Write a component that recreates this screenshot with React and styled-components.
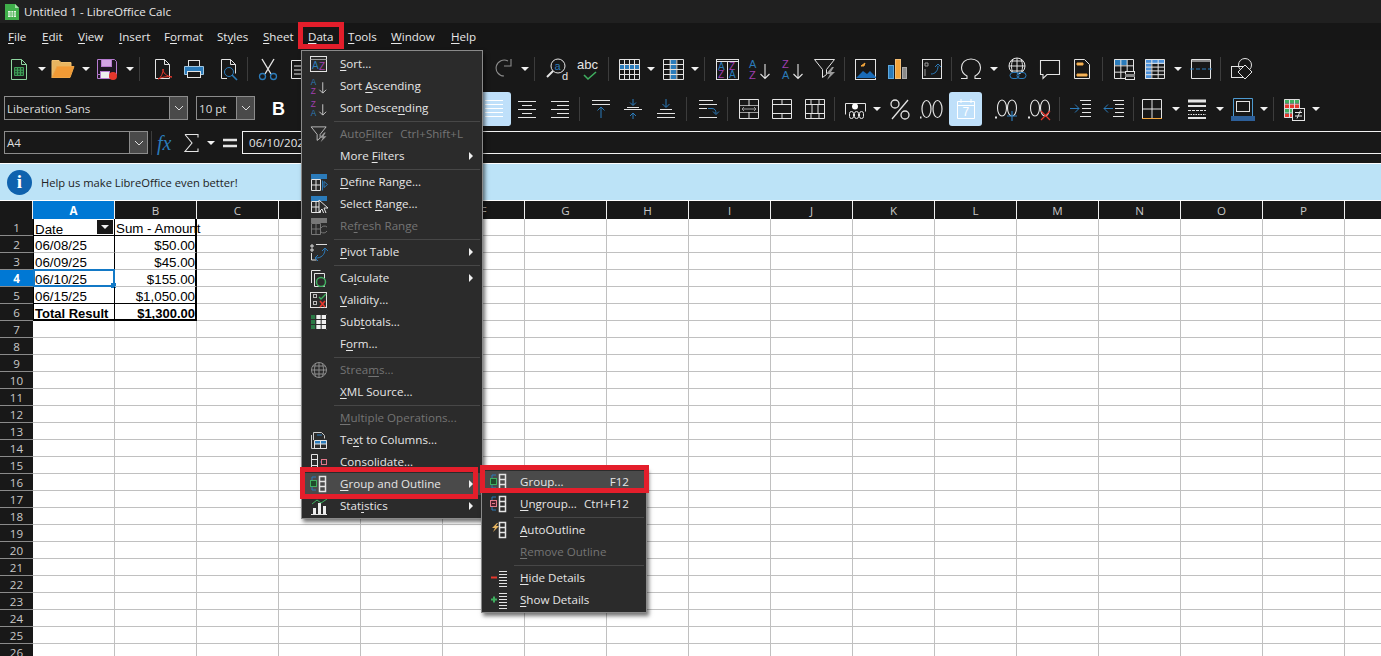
import React from "react";
import styled, { createGlobalStyle } from "styled-components";

const UI_FONT = `"Open Sans", "Noto Sans", sans-serif`;
const W = "#e4e4e4";
const B = "#2b7bba";
const P = "#a03fb0";
const G = "#3fae5f";
const O = "#f2a53c";
const R = "#e5382d";
const D = "#9a9a9a";

const GlobalStyle = createGlobalStyle`
  html, body {
    margin: 0;
    background: #fff;
    overflow: hidden;
  }
  * {
    box-sizing: border-box;
  }
`;

const Window = styled.div`
  position: relative;
  width: 1381px;
  height: 656px;
  overflow: hidden;
  background: #181818;
  font-family: ${UI_FONT};
  font-size: 11.6px;
  color: #e4e4e4;
`;

const TitleBar = styled.div`
  height: 23px;
  background: #202020;
  display: flex;
  align-items: center;
  padding-left: 3px;
  gap: 3px;
  color: #e6e6e6;
`;

const MenuBar = styled.div`
  height: 27px;
  display: flex;
  align-items: center;
  padding-left: 8px;
  gap: 16px;
  background: #161616;
  color: #e8e8e8;
`;

const MenuName = styled.span`
  width: ${(p) => p.$w}px;
  white-space: nowrap;
`;

const Under = styled.span`
  text-decoration: underline;
  text-underline-offset: 2px;
`;

const Toolbar = styled.div`
  display: flex;
  align-items: center;
  height: ${(p) => p.$h}px;
  padding-left: ${(p) => p.$pad || 0}px;
  background: #181818;
`;

const Slot = styled.div`
  flex: none;
  width: ${(p) => p.$w}px;
  margin-left: ${(p) => p.$ml}px;
  height: 34px;
  display: flex;
  align-items: center;
  justify-content: center;
`;

const Caret = styled.i`
  width: 0;
  height: 0;
  border-left: 4px solid transparent;
  border-right: 4px solid transparent;
  border-top: 4px solid #f0f0f0;
`;

const Divider = styled.i`
  flex: none;
  width: 1px;
  height: 24px;
  background: #3c3c3c;
`;

const Toggled = styled.div`
  flex: none;
  width: 33px;
  height: 34px;
  border-radius: 3px;
  background: #bfe0fa;
  display: flex;
  align-items: center;
  justify-content: center;
`;

const Combo = styled.div`
  flex: none;
  width: ${(p) => p.$w}px;
  height: ${(p) => p.$h}px;
  margin-right: ${(p) => p.$mr || 0}px;
  margin-bottom: ${(p) => p.$mb || 0}px;
  border: 1px solid #8c8c8c;
  display: flex;
  align-items: center;
  background: #181818;
  color: #dcdcdc;
  padding-left: 2px;
`;

const ComboText = styled.span`
  flex: 1;
  white-space: nowrap;
`;

const ComboButton = styled.div`
  width: 18px;
  align-self: stretch;
  background: #4a4a4a;
  border-left: 1px solid #8c8c8c;
  display: flex;
  align-items: center;
  justify-content: center;
`;

const FormulaBar = styled.div`
  height: 33px;
  padding: 1px 0 9px 4px;
  display: flex;
  align-items: stretch;
  background: #181818;
`;

const FormulaTools = styled.div`
  display: flex;
  align-items: center;
`;

const FormulaInput = styled.div`
  flex: 1;
  border: 1px solid #f2f2f2;
  border-right: 0;
  display: flex;
  align-items: center;
  padding-left: 6px;
  color: #e6e6e6;
`;

const InfoBar = styled.div`
  height: 38px;
  border-top: 1px solid #fff;
  border-bottom: 1px solid #fff;
  background: #bce3f7;
  display: flex;
  align-items: center;
  gap: 9px;
  padding-left: 7px;
  color: #222;
  font-size: 11.2px;
`;

const InfoBadge = styled.div`
  width: 25px;
  height: 25px;
  border-radius: 50%;
  background: #0f62ae;
  color: #fff;
  font: bold 19px "Liberation Serif", serif;
  display: flex;
  align-items: center;
  justify-content: center;
`;

const Sheet = styled.div`
  display: grid;
  grid-template-columns: 33px repeat(17, 82px);
  grid-template-rows: 18px;
  grid-auto-rows: 17px;
  background: #fff;
`;

const ColHead = styled.div`
  background: ${(p) => (p.$on ? "#0078d4" : "#181818")};
  color: ${(p) => (p.$on ? "#fff" : "#c8c8c8")};
  font-weight: ${(p) => (p.$on ? 700 : 400)};
  border-right: 1px solid #f0f0f0;
  display: flex;
  align-items: center;
  justify-content: center;
`;

const RowHead = styled.div`
  background: ${(p) => (p.$on ? "#0078d4" : "#181818")};
  color: ${(p) => (p.$on ? "#fff" : "#c8c8c8")};
  font-weight: ${(p) => (p.$on ? 700 : 400)};
  border-bottom: 1px solid #8a8a8a;
  display: flex;
  align-items: center;
  justify-content: center;
`;

const Cell = styled.div`
  position: relative;
  border-right: ${(p) => p.$rw || 1}px solid ${(p) => p.$rc || "#c0c0c0"};
  border-bottom: ${(p) => p.$bw || 1}px solid ${(p) => p.$bc || "#c0c0c0"};
  border-left: ${(p) => (p.$frame ? "1px solid #000" : "0")};
  font-family: "Liberation Sans", Arial, sans-serif;
  font-size: ${(p) => (p.$bold ? 13 : 13.33)}px;
  font-weight: ${(p) => (p.$bold ? 700 : 400)};
  color: #000;
  line-height: ${(p) => p.$lh || 19}px;
  white-space: nowrap;
  padding: 0 ${(p) => (p.$right ? 0 : 1)}px 0 1px;
  text-align: ${(p) => (p.$right ? "right" : "left")};
`;

const FilterButton = styled.div`
  position: absolute;
  right: 1px;
  top: 1px;
  width: 16px;
  height: 14px;
  background: #181818;
  display: flex;
  align-items: center;
  justify-content: center;
`;

const CellCursor = styled.div`
  position: absolute;
  left: -1px;
  top: -1px;
  right: -1px;
  bottom: -1px;
  border: 2px solid #1379c6;
`;

const CursorHandle = styled.i`
  position: absolute;
  right: -3px;
  bottom: -3px;
  width: 5px;
  height: 5px;
  background: #1379c6;
`;

const Menu = styled.div`
  position: absolute;
  left: ${(p) => p.$x}px;
  top: ${(p) => p.$y}px;
  width: ${(p) => p.$w}px;
  padding: 2px 0 1px 1px;
  background: #2b2b2b;
  border: 1px solid #8a8a8a;
  box-shadow: 2px 3px 4px rgba(0, 0, 0, 0.55);
  color: #e6e6e6;
`;

const MenuRow = styled.div`
  height: 22px;
  display: flex;
  align-items: center;
  background: ${(p) => (p.$active ? "#4a4a4a" : "transparent")};
  color: ${(p) => (p.$off ? "#747474" : "inherit")};
`;

const RowIcon = styled.div`
  flex: none;
  width: ${(p) => p.$w}px;
  display: flex;
  justify-content: center;
  padding-right: 5px;
`;

const RowLabel = styled.span`
  flex: 1;
  margin-top: -2px;
  white-space: nowrap;
`;

const Shortcut = styled.span`
  margin-top: -2px;
  padding-right: ${(p) => p.$pad}px;
  white-space: nowrap;
`;

const SubArrow = styled.i`
  margin-right: 9px;
  width: 0;
  height: 0;
  border-top: 4px solid transparent;
  border-bottom: 4px solid transparent;
  border-left: 4px solid #f0f0f0;
`;

const MenuLine = styled.div`
  height: 4px;
  margin-left: ${(p) => p.$in}px;
  margin-right: 2px;
  display: flex;
  align-items: center;
  &::after {
    content: "";
    flex: 1;
    height: 1px;
    background: #474747;
  }
`;

const Callout = styled.div`
  position: absolute;
  left: ${(p) => p.$x}px;
  top: ${(p) => p.$y}px;
  width: ${(p) => p.$w}px;
  height: ${(p) => p.$h}px;
  border: 5px solid #e41e2b;
`;

const Ltr = ({ x, y, c, s = 9, children, w = 400 }) => (
  <text x={x} y={y} fill={c} stroke="none" fontSize={s} fontWeight={w} fontFamily="Liberation Sans, sans-serif">
    {children}
  </text>
);

const grid = (x, y, w, h, cols, rows) => {
  let d = `M${x} ${y}h${w}v${h}h${-w}z`;
  for (let i = 1; i < cols; i++) d += `M${x + (i * w) / cols} ${y}v${h}`;
  for (let i = 1; i < rows; i++) d += `M${x} ${y + (i * h) / rows}h${w}`;
  return d;
};

const bars = (x, y, w, ys) => ys.map((v) => `M${x} ${y + v}h${w}`).join("");

const icons = {
  newSheet: (
    <g stroke="#8fd6a0">
      <path d="M4.5 2.5h10l5 5v15h-15z" />
      <path d="M14.500 2.500v5h5" />
      <path d={grid(7.5, 10.5, 9, 8, 3, 3)} stroke="#3f9e58" fill="#1f4a2b" />
    </g>
  ),
  folder: (
    <g>
      <path d="M1 3.5h7l2 2h10v4H6l-5 11z" fill="#e8b560" stroke="#f0c070" />
      <path d="M6 9.5h17l-4 11H1z" fill="#f19a35" stroke="#f0a545" />
    </g>
  ),
  save: (
    <g stroke="#b67bd0">
      <path d="M2.5 2.5h17l2 2v13h-19z M2.5 17.5v4h11" fill="#1d1622" />
      <rect x="6.5" y="2.5" width="10" height="7" fill="#d2a4e4" stroke="#b67bd0" />
      <rect x="5.5" y="14.5" width="9" height="7" fill="#eee" stroke="#b67bd0" />
      <circle cx="18" cy="19" r="4" fill={R} stroke="none" />
    </g>
  ),
  pdf: (
    <g>
      <path d="M5.5 2.5h9l5 5v14h-14z" />
      <path d="M14.5 2.5v5h5" />
      <path d="M8 22c4-2 5-7 5-10 0 4 3 7 9 8-5-1-10 0-14 2z" stroke={R} />
    </g>
  ),
  print: (
    <g>
      <rect x="6.5" y="3.5" width="11" height="6" />
      <path d="M2.5 9.5h19v8h-19z" fill={B} stroke="#9fc5e0" />
      <rect x="5.5" y="14.5" width="13" height="6" fill="#181818" />
    </g>
  ),
  preview: (
    <g>
      <path d="M5.5 2.5h9l5 5v9M11 21.5H5.5v-19M14.5 2.5v5h5" />
      <circle cx="13" cy="15" r="4.5" stroke={B} />
      <path d="M16 18l5 5" stroke={B} strokeWidth="1.6" />
    </g>
  ),
  cut: (
    <g>
      <path d="M6 2l9 15M18 2L9 17" strokeWidth="1.4" />
      <circle cx="6.5" cy="19.5" r="3" stroke={B} strokeWidth="1.3" />
      <circle cx="17.5" cy="19.5" r="3" stroke={B} strokeWidth="1.3" />
    </g>
  ),
  copy: <path d="M6.5 3.5h12v18h-12zM9 9h7M9 13h7M9 17h7" />,
  redo: <path d="M17 4A8 8 0 1 0 13 19M20 2v7h-7" stroke="#8c8c8c" strokeWidth="1.1" />,
  find: (
    <g>
      <circle cx="12" cy="9" r="7" />
      <path d="M7 14l-6 6" strokeWidth="2" />
      <Ltr x="8.500" y="13" c={B} s="11">a</Ltr>
      <Ltr x="16" y="23" c={W} s="11">d</Ltr>
    </g>
  ),
  spell: (
    <g>
      <Ltr x="1" y="12" c={W} s="13">abc</Ltr>
      <path d="M8 18l4 4 8-7" stroke={G} strokeWidth="1.6" />
    </g>
  ),
  rowGrid: (
    <g>
      <path d="M2 7h20v6H2z" fill={B} stroke="none" />
      <path d={grid(2.5, 2.5, 20, 20, 4, 4)} />
    </g>
  ),
  colGrid: (
    <g>
      <path d="M9 2h6v20H9z" fill={B} stroke="none" />
      <path d={grid(2.5, 2.5, 20, 20, 3, 4)} />
    </g>
  ),
  sort: (
    <g>
      <rect x="1.5" y="2.5" width="22" height="20" />
      <path d="M1 4.5h23" />
      <path d="M12.5 5v17" />
      <Ltr x="3" y="13" c={B} s="10">A</Ltr>
      <Ltr x="3" y="21" c={P} s="10">Z</Ltr>
      <Ltr x="14" y="13" c={P} s="10">Z</Ltr>
      <Ltr x="14" y="21" c={B} s="10">A</Ltr>
    </g>
  ),
  menuSort: (
    <g>
      <rect x="0.500" y="1.500" width="16" height="15" />
      <path d="M0.500 4.500h16" stroke={D} />
      <Ltr x="2" y="14" c={B} s="10">A</Ltr>
      <Ltr x="9" y="15" c={P} s="10">Z</Ltr>
    </g>
  ),
  asc: (
    <g>
      <Ltr x="1" y="11" c={B} s="11">A</Ltr>
      <Ltr x="1" y="22" c={P} s="11">Z</Ltr>
      <path d="M17 7v14M12.5 17l4.5 4.5 4.5-4.500" strokeWidth="1.1" />
    </g>
  ),
  desc: (
    <g>
      <Ltr x="1" y="11" c={P} s="11">Z</Ltr>
      <Ltr x="1" y="22" c={B} s="11">A</Ltr>
      <path d="M17 7v14M12.5 17l4.5 4.5 4.5-4.500" strokeWidth="1.1" />
    </g>
  ),
  filter: (
    <g>
      <path d="M1.5 2.5h20l-8 10v5l-4 3v-8z" />
      <path d="M19 10l-6 7h4l-3 6 8-8h-4l3-5z" fill="#9a9a9a" stroke="none" />
    </g>
  ),
  image: (
    <g>
      <rect x="1.5" y="2.5" width="20" height="20" />
      <path d="M2 21l7-7 4 3 3-3 6 6v1z" fill="#1a6cb8" stroke="none" />
      <path d="M7 9l4-3-1 3z" fill={O} stroke={O} />
    </g>
  ),
  chart: (
    <g>
      <rect x="2.5" y="8.5" width="5" height="13" fill={B} stroke="#5da9df" />
      <rect x="9.5" y="2.5" width="5" height="19" fill={O} stroke="#f5bf75" />
      <rect x="16.5" y="10.5" width="4" height="11" fill="#8a8a8a" stroke="#aaa" />
    </g>
  ),
  pivot: (
    <g>
      <rect x="2.5" y="2.5" width="19" height="19" />
      <path d="M5 6h3v3H5zM5 12v7" stroke={D} />
      <path d="M11 17c4 0 7-3 7-8M15 10l3-3 3 3" stroke={B} />
    </g>
  ),
  omega: (
    <path d="M2 21.500h6v-2.500C4 17 2.500 13.500 2.500 10.500 2.500 5.500 6.500 2 12 2s9.500 3.500 9.500 8.500c0 3-1.500 6.500-5.500 8.500v2.500h6" strokeWidth="1.100" />
  ),
  link: (
    <g>
      <circle cx="11" cy="9" r="8" />
      <path d="M3 9h16M11 1v16M5 4h12M5 14h12M7 2c-2 5-2 10 0 14M15 2c2 5 2 10 0 14" />
      <rect x="4" y="15.500" width="9" height="6" rx="3" stroke={B} fill="#181818" />
      <rect x="11" y="15.500" width="9" height="6" rx="3" stroke={B} />
    </g>
  ),
  comment: <path d="M2.500 3.500h19v14H9l-4 4v-4H2.500z" strokeWidth="1.100" />,
  header: (
    <g>
      <path d="M4.500 2.500h10l5 5v14h-15z" />
      <path d="M7 6h6v2H7zM7 17h10v2H7z" fill="#f5c27a" stroke={O} />
    </g>
  ),
  printArea: (
    <g>
      <path d="M2 2h13v6H2z" fill={B} stroke="none" />
      <path d={grid(2.500, 2.500, 19, 19, 3, 3)} />
      <rect x="13.500" y="14.500" width="9" height="8" fill="#181818" />
      <path d="M13 17h10v3H13z" fill="#888" stroke="none" />
    </g>
  ),
  freeze: (
    <g>
      <path d="M2 2h6v20H2zM8 3h14v4H8z" fill="#4a90d9" stroke="none" />
      <path d={grid(2.500, 2.500, 19, 19, 3, 5)} />
    </g>
  ),
  split: (
    <g>
      <path d="M3 2h18v3H3z" fill="#888" stroke="none" />
      <path d="M2.500 2.500h19v19h-19z" />
      <path d="M1 12h22" stroke={B} strokeDasharray="4 2" />
    </g>
  ),
  shapes: (
    <g>
      <rect x="1.500" y="9.500" width="11" height="11" />
      <circle cx="15" cy="8" r="6.500" />
      <path d="M15 8l7 7-7 7-7-7z" fill="#181818" />
    </g>
  ),
  bold: <Ltr x="5" y="18" c="#fff" s="18" w={700}>B</Ltr>,
  alignLeft: <path d={bars(3, 0.5, 18, [3, 7, 11, 15, 19])} stroke="#fff" />,
  alignCenter: <path d="M3 4.500h18M7 8.500h10M3 12.500h18M7 16.500h10M3 20.500h18" />,
  alignRight: <path d="M3 4.500h18M9 8.500h12M3 12.500h18M9 16.500h12M3 20.500h18" />,
  vTop: (
    <g>
      <path d="M3 3.500h18M3 7.500h18" />
      <path d="M12 21V10M8.500 13.500L12 10l3.500 3.500" stroke={B} />
    </g>
  ),
  vCenter: (
    <g>
      <path d="M3 12.500h18" />
      <path d="M6 10.500h12" />
      <path d="M12 2v6M9 5.500L12 8.500l3-3M12 22v-6M9 19l3-3 3 3" stroke={B} />
    </g>
  ),
  vBottom: (
    <g>
      <path d="M3 16.500h18M3 20.500h18M6 12.500h12" />
      <path d="M12 2v8M8.500 7L12 10.500 15.500 7" stroke={B} />
    </g>
  ),
  wrap: (
    <g>
      <path d="M3 3.500h14M3 7.500h18M3 11.500h8M3 20.500h18" />
      <path d="M12 11.500h4c3 0 4 2 4 5M17 14.500l3 3 3-3" stroke={B} />
    </g>
  ),
  merge: (
    <g>
      <path d={grid(2.500, 2.500, 19, 19, 2, 3)} />
      <path d="M3 9h18v6H3z" fill="#181818" stroke="none" />
      <path d="M5 12h14M5 12l2-2M5 12l2 2M19 12l-2-2M19 12l-2 2" stroke={D} />
    </g>
  ),
  unmerge: <path d="M2.500 2.500h19v19h-19zM2.500 7.500h19M2.500 16.500h19M12 2.500v5M12 16.500v5" />,
  mergeCols: (
    <path d="M2.500 2.500h19v19h-19zM2.500 7.500h19M2.500 16.500h19M9 7.500v9M15 7.500v9M8 2.500v5M16 2.500v5M8 16.500v5M16 16.500v5" />
  ),
  currency: (
    <g>
      <path d="M2.500 17.500v-11h20v8" />
      <circle cx="12" cy="9.500" r="3" fill="#fff" stroke="none" />
      <rect x="6.500" y="14.500" width="4" height="7" rx="2" />
      <rect x="11.500" y="14.500" width="4" height="7" rx="2" />
      <rect x="16.500" y="14.500" width="4" height="7" rx="2" />
    </g>
  ),
  percent: (
    <g strokeWidth="1.300">
      <path d="M20 3L4 22" />
      <circle cx="7" cy="7" r="4" />
      <circle cx="17" cy="18" r="4" />
    </g>
  ),
  number: (
    <g>
      <ellipse cx="6.500" cy="12" rx="4.500" ry="8.500" strokeWidth="1.200" />
      <ellipse cx="17.500" cy="12" rx="4.500" ry="8.500" strokeWidth="1.200" />
      <path d="M0 20.500h1.500" strokeWidth="2" />
    </g>
  ),
  date: (
    <g stroke="#fff">
      <path d="M3.500 4.500h17v17h-17z M3.500 8.500h17M7 2v4M17 2v4" />
      <Ltr x="8.500" y="19" c="#fff" s="12">7</Ltr>
    </g>
  ),
  addDecimal: (
    <g>
      <path d="M0 20.500h2" strokeWidth="2" />
      <ellipse cx="7" cy="11" rx="4.500" ry="8" strokeWidth="1.100" />
      <ellipse cx="17" cy="11" rx="4.500" ry="8" strokeWidth="1.100" />
      <path d="M17 14v10M12 19h10" stroke={B} strokeWidth="1.200" />
    </g>
  ),
  delDecimal: (
    <g>
      <path d="M0 20.500h2" strokeWidth="2" />
      <ellipse cx="7" cy="11" rx="4.500" ry="8" strokeWidth="1.100" />
      <ellipse cx="17" cy="11" rx="4.500" ry="8" strokeWidth="1.100" />
      <path d="M13 14l9 9M22 14l-9 9" stroke={R} strokeWidth="1.200" />
    </g>
  ),
  indent: (
    <g>
      <path d="M11 3.500h11M13 7.500h9M13 11.500h9M13 15.500h9M11 19.500h11" />
      <path d="M1 11.500h9M6 7.500l4 4-4 4" stroke={B} />
    </g>
  ),
  outdent: (
    <g>
      <path d="M11 3.500h11M13 7.500h9M13 11.500h9M13 15.500h9M11 19.500h11" />
      <path d="M11 11.500H2M6 7.500l-4 4 4 4" stroke={B} />
    </g>
  ),
  borders: (
    <g>
      <path d="M2.500 21V2.500h19V21M2.500 12h19M12 2.500v19" />
      <path d="M2 21.500h20" stroke={O} />
    </g>
  ),
  borderStyle: (
    <g>
      <path d="M3 4h18" strokeWidth="3" />
      <path d="M3 9h18" strokeWidth="2" />
      <path d="M3 13.500h18" strokeDasharray="3 1" />
      <path d="M3 17.500h18" strokeDasharray="1.500 1" />
      <path d="M3 21h18" strokeWidth="2" />
    </g>
  ),
  borderColor: (
    <g>
      <path d="M2.500 1.500h19v18h-19z" stroke="#4d9ad0" />
      <rect x="5.500" y="4.500" width="13" height="10" />
      <path d="M0 19h24v5H0z" fill="#2d5f99" stroke="none" />
    </g>
  ),
  conditional: (
    <g>
      <path d="M2 2h15v4H2z" fill={G} stroke="none" />
      <path d="M2 7h15v4H2z" fill={R} stroke="none" />
      <path d="M2 12h8v4H2z" fill={G} stroke="none" />
      <path d="M2 17h8v4H2z" fill={R} stroke="none" />
      <path d={grid(2.500, 2.500, 15, 18, 3, 4)} stroke="#ddd" />
      <rect x="10.500" y="11.500" width="12" height="12" fill="#181818" />
      <path d="M13 15.500h7M13 19h7M18.500 13.500l-3.500 8" />
    </g>
  ),
  fx: (
    <text x="1" y="19" fill={B} stroke="none" fontSize="20" fontStyle="italic" fontFamily="Liberation Serif, serif">
      fx
    </text>
  ),
  sigma: <path d="M5 3.500h13v3M5 3.500l7 8.500-7 8.500h13v-3" strokeWidth="1.100" />,
  equals: <path d="M5 9h14M5 15h14" strokeWidth="2.500" />,
  defineRange: (
    <g>
      <path d="M1 1h16v5H1z" fill={B} stroke="none" />
      <path d="M1.500 6.500h9v11h-9zM6 6.500v11M1.500 12h9" />
      <path d="M12.500 7.500v10M14 8.500l3.500 3-3.500 3z" stroke={B} />
    </g>
  ),
  selectRange: (
    <g>
      <path d="M1 1h16v5H1z" fill={B} stroke="none" />
      <path d="M1.500 6.500h9v11h-9zM6 6.500v11M1.500 12h9" />
      <path d="M9 5l9 8h-4l2 5-2 1-2-5-3 3z" fill="#2b2b2b" />
    </g>
  ),
  refreshRange: (
    <g stroke="#777">
      <path d="M1 1h16v5H1z" fill="#777" stroke="none" />
      <path d="M1.500 6.500h9v11h-9zM6 6.500v11M1.500 12h9" />
      <path d="M11 11a4 4 0 0 1 6-1M17 14a4 4 0 0 1-6 1" />
    </g>
  ),
  pivotSmall: (
    <g>
      <path d="M1 2h2v2H1zM1 6h2v2H1zM6 1.500h11M1.500 10v7h5" stroke="#ddd" />
      <path d="M6 15c5 0 9-3 9-9M12 8l3-3 3 3M8 12l-3 3 3 3" stroke={B} />
    </g>
  ),
  calculate: (
    <g>
      <path d="M1.500 14V1.500h9M4.500 4.500h10v13h-10z" />
      <circle cx="11" cy="13" r="4.500" stroke={G} strokeWidth="1.500" fill="#2b2b2b" />
    </g>
  ),
  validity: (
    <g>
      <rect x="0.500" y="1.500" width="16" height="15" />
      <rect x="3.500" y="3.500" width="3" height="3" stroke="#bbb" />
      <rect x="3.500" y="10.500" width="3" height="3" stroke="#bbb" />
      <path d="M9 6l2 2 5-5" stroke={G} strokeWidth="1.400" />
      <path d="M10 10l5 6M15 10l-5 6" stroke={R} strokeWidth="1.600" />
    </g>
  ),
  subtotals: (
    <g>
      <path d="M0.500 1h5v16h-5z" fill="#2a7a45" stroke="none" />
      <path d="M6 1h11v16H6z" fill="#f0f0f0" stroke="none" />
      <path d={grid(0.500, 1.500, 16, 15, 3, 3)} stroke="#2b2b2b" />
    </g>
  ),
  streams: (
    <g stroke="#8c8c8c">
      <circle cx="9" cy="9" r="7.500" />
      <path d="M1.500 9h15M9 1.500v15M3 5h12M3 13h12M6 2c-2 4-2 10 0 14M12 2c2 4 2 10 0 14" />
    </g>
  ),
  textColumns: (
    <g>
      <path d="M3.500 9V1.500h8l3 3v3" stroke="#ccc" />
      <path d="M1.500 4v13.500h15" stroke="#ccc" />
      <path d="M5 9h12v4H5z" fill={B} stroke="none" />
      <path d="M4.500 9.500h12v8h-12zM10.500 9.500v8M4.500 13h12" />
      <path d="M7 4h5" stroke={B} />
    </g>
  ),
  consolidate: (
    <g>
      <path d="M1.500 1.500h6v16h-6zM1.500 6.500h6M1.500 12.500h6" />
      <path d="M10 9h2" stroke={B} />
      <rect x="11.500" y="6.500" width="5" height="5" stroke="#e0788a" />
    </g>
  ),
  group: (
    <g>
      <path d="M6 2H2v13h4" stroke={B} />
      <rect x="0.500" y="5.500" width="6" height="6" stroke={G} fill="#1f4a2b" />
      <path d={grid(9.500, 1.500, 6, 15, 1, 3)} strokeWidth="1.500" />
    </g>
  ),
  ungroup: (
    <g>
      <path d="M6 2H2v13h4" stroke={B} />
      <rect x="0.500" y="5.500" width="6" height="6" stroke="#e0788a" fill="#4a1f2a" />
      <path d="M2 8.500h3" stroke="#e0788a" />
      <path d={grid(9.500, 1.500, 6, 15, 1, 3)} strokeWidth="1.500" />
    </g>
  ),
  autoOutline: (
    <g>
      <path d="M7 2L2 7h3l-2 4 6-6H6l2-3z" fill="#e8b560" stroke="none" />
      <path d={grid(9.500, 1.500, 6, 15, 1, 3)} strokeWidth="1.500" />
    </g>
  ),
  hide: (
    <g>
      <path d="M1 8.500h6" stroke={R} strokeWidth="2" />
      <path d={bars(9, 0.5, 8, [2, 5, 8, 11, 14, 17])} />
    </g>
  ),
  show: (
    <g>
      <path d="M1 8.500h6M4 5.500v6" stroke={G} strokeWidth="2" />
      <path d={bars(9, 0.5, 8, [2, 5, 8, 11, 14, 17])} />
    </g>
  ),
  statistics: (
    <g>
      <path d="M1 17.500h16" />
      <path d="M3 11h3v6H3zM8 6h3v11H8zM13 9h3v8h-3z" fill="#eee" stroke="none" />
      <path d="M2 7l5-4 4 3 6-4" stroke={G} />
    </g>
  ),
};

const Icon = ({ name, size = 24, vb = size }) => (
  <svg width={size} height={size} viewBox={`0 0 ${vb} ${vb}`} fill="none" stroke={W} strokeWidth="1">
    {icons[name]}
  </svg>
);

const slotWidth = (name) => (name === "dd" ? 8 : name === "sep" ? 1 : name.startsWith("on:") ? 33 : 24);

// items are [icon, centre x]; the gap before each one comes from the previous item's end
const ToolRow = ({ items, start }) => {
  let end = start;
  return items.map(([name, x], i) => {
    const w = slotWidth(name);
    const ml = x - w / 2 - end;
    end = x + w / 2;
    return (
      <Slot key={i} $w={w} $ml={ml}>
        {name === "dd" && <Caret />}
        {name === "sep" && <Divider />}
        {name.startsWith("on:") && (
          <Toggled>
            <Icon name={name.slice(3)} />
          </Toggled>
        )}
        {w === 24 && <Icon name={name} />}
      </Slot>
    );
  });
};

const standardTools = [
  ["newSheet", 19], ["dd", 42], ["folder", 63], ["dd", 86], ["save", 107], ["dd", 130], ["sep", 139],
  ["pdf", 162], ["print", 194], ["preview", 228], ["sep", 247], ["cut", 268], ["copy", 297],
  ["redo", 503], ["dd", 525], ["sep", 534], ["find", 558], ["spell", 588], ["sep", 608],
  ["rowGrid", 629], ["dd", 651], ["colGrid", 673], ["dd", 695], ["sep", 704], ["sort", 727],
  ["asc", 760], ["desc", 793], ["filter", 825], ["sep", 844], ["image", 866], ["chart", 898],
  ["pivot", 932], ["sep", 951], ["omega", 971], ["dd", 994], ["link", 1018], ["comment", 1050],
  ["header", 1082], ["sep", 1102], ["printArea", 1124], ["freeze", 1155], ["dd", 1178],
  ["split", 1201], ["sep", 1220], ["shapes", 1242],
];

const formatTools = [
  ["bold", 279], ["on:alignLeft", 494], ["alignCenter", 527], ["alignRight", 560], ["sep", 579],
  ["vTop", 601], ["vCenter", 633], ["vBottom", 666], ["sep", 686], ["wrap", 708], ["sep", 727],
  ["merge", 749], ["unmerge", 782], ["mergeCols", 815], ["sep", 834], ["currency", 855], ["dd", 877],
  ["percent", 900], ["number", 932], ["on:date", 965.5], ["addDecimal", 1007], ["delDecimal", 1040],
  ["sep", 1059], ["indent", 1081], ["outdent", 1114], ["sep", 1133], ["borders", 1152], ["dd", 1176],
  ["borderStyle", 1197], ["dd", 1220], ["borderColor", 1243], ["dd", 1264], ["sep", 1273],
  ["conditional", 1294], ["dd", 1316],
];

const formulaTools = [["sep", 151], ["fx", 168], ["sigma", 192], ["dd", 211], ["equals", 230]];

const mainMenu = [
  ["&File", 18], ["&Edit", 20], ["&View", 25], ["&Insert", 29], ["F&ormat", 37], ["St&yles", 30],
  ["&Sheet", 29], ["&Data", 24], ["&Tools", 27], ["&Window", 44], ["&Help", 25],
];

const dataItems = [
  { icon: "menuSort", label: "&Sort..." },
  { icon: "asc", label: "Sort &Ascending", vb: 24 },
  { icon: "desc", label: "Sort Desce&nding", vb: 24 },
  { sep: true },
  { icon: "filter", label: "Auto&Filter", vb: 24, off: true, keys: "Ctrl+Shift+L" },
  { label: "More &Filters", more: true },
  { sep: true },
  { icon: "defineRange", label: "&Define Range..." },
  { icon: "selectRange", label: "Select &Range..." },
  { icon: "refreshRange", label: "Re&fresh Range", off: true },
  { sep: true },
  { icon: "pivotSmall", label: "&Pivot Table", more: true },
  { sep: true },
  { icon: "calculate", label: "Ca&lculate", more: true },
  { icon: "validity", label: "&Validity..." },
  { icon: "subtotals", label: "Sub&totals..." },
  { label: "F&orm..." },
  { sep: true },
  { icon: "streams", label: "Strea&ms...", off: true },
  { label: "&XML Source..." },
  { sep: true },
  { label: "&Multiple Operations...", off: true },
  { icon: "textColumns", label: "Te&xt to Columns..." },
  { icon: "consolidate", label: "Co&nsolidate..." },
  { icon: "group", label: "&Group and Outline", more: true, active: true },
  { icon: "statistics", label: "Stat&istics", more: true },
];

const groupItems = [
  { icon: "group", label: "&Group...", keys: "F12", active: true },
  { icon: "ungroup", label: "&Ungroup...", keys: "Ctrl+F12" },
  { sep: true },
  { icon: "autoOutline", label: "&AutoOutline" },
  { label: "&Remove Outline", off: true },
  { sep: true },
  { icon: "hide", label: "&Hide Details" },
  { icon: "show", label: "&Show Details" },
];

// "&" marks the underlined access key, like in the LibreOffice menu files
const Label = ({ text }) => {
  const at = text.indexOf("&");
  if (at < 0) return text;
  return (
    <>
      {text.slice(0, at)}
      <Under>{text[at + 1]}</Under>
      {text.slice(at + 2)}
    </>
  );
};

const PopupMenu = ({ items, x, y, w, iconW, keyPad }) => (
  <Menu $x={x} $y={y} $w={w}>
    {items.map((item, i) =>
      item.sep ? (
        <MenuLine key={i} $in={iconW - 6} />
      ) : (
        <MenuRow key={i} $active={item.active} $off={item.off}>
          <RowIcon $w={iconW}>{item.icon && <Icon name={item.icon} size={18} vb={item.vb || 18} />}</RowIcon>
          <RowLabel>
            <Label text={item.label} />
          </RowLabel>
          {item.keys && <Shortcut $pad={keyPad}>{item.keys}</Shortcut>}
          {item.more && <SubArrow />}
        </MenuRow>
      )
    )}
  </Menu>
);

const ComboChevron = () => (
  <ComboButton>
    <svg width="10" height="6" viewBox="0 0 10 6" fill="none" stroke="#ddd">
      <path d="M1 1l4 4 4-4" />
    </svg>
  </ComboButton>
);

const columns = "ABCDEFGHIJKLMNOPQ".split("");
const pivotRows = [
  ["06/08/25", "$50.00"],
  ["06/09/25", "$45.00"],
  ["06/10/25", "$155.00"],
  ["06/15/25", "$1,050.00"],
  ["Total Result", "$1,300.00"],
];

const SheetRow = ({ n }) => {
  const pivot = n >= 2 && n <= 6 ? pivotRows[n - 2] : null;
  const total = n === 6;
  const blank = columns.slice(n <= 6 ? 2 : 0);
  return (
    <>
      <RowHead $on={n === 4}>{n}</RowHead>
      {n === 1 && (
        <>
          <Cell $frame $rc="#000" $bc="#000" $lh={21}>
            Date
            <FilterButton>
              <Caret />
            </FilterButton>
          </Cell>
          <Cell $rc="#000" $rw={2} $bc="#000">
            Sum - Amount
          </Cell>
        </>
      )}
      {pivot && (
        <>
          <Cell $frame $rc="#000" $bc={total || n === 5 ? "#000" : undefined} $bw={total ? 2 : 1} $bold={total}>
            {pivot[0]}
            {n === 4 && (
              <CellCursor>
                <CursorHandle />
              </CellCursor>
            )}
          </Cell>
          <Cell $right $rc="#000" $rw={2} $bc={total || n === 5 ? "#000" : undefined} $bw={total ? 2 : 1} $bold={total}>
            {pivot[1]}
          </Cell>
        </>
      )}
      {blank.map((c) => (
        <Cell key={c} />
      ))}
    </>
  );
};

const rowNumbers = Array.from({ length: 26 }, (_, i) => i + 1);

export default function App() {
  return (
    <Window>
      <GlobalStyle />
      <TitleBar>
        <svg width="18" height="18" viewBox="0 0 18 18">
          <path d="M2 1h10l4 4v12H2z" fill="#3fae4a" />
          <path d="M12 1v4h4z" fill="#a5dfa9" />
          <path d="M5 8h8v6H5z" fill="#e8f6e8" />
          <path d="M5 10h8M5 12h8M8 8v6M10.500 8v6" stroke="#3fae4a" strokeWidth="0.700" />
        </svg>
        Untitled 1 - LibreOffice Calc
      </TitleBar>
      <MenuBar>
        {mainMenu.map(([name, w]) => (
          <MenuName key={name} $w={w}>
            <Label text={name} />
          </MenuName>
        ))}
      </MenuBar>
      <Toolbar $h={38}>
        <ToolRow items={standardTools} start={0} />
      </Toolbar>
      <Toolbar $h={42} $pad={4}>
        <Combo $w={184} $h={24} $mr={8} $mb={2}>
          <ComboText>Liberation Sans</ComboText>
          <ComboChevron />
        </Combo>
        <Combo $w={59} $h={24} $mb={2}>
          <ComboText>10 pt</ComboText>
          <ComboChevron />
        </Combo>
        <ToolRow items={formatTools} start={255} />
      </Toolbar>
      <FormulaBar>
        <Combo $w={144} $h={23}>
          <ComboText>A4</ComboText>
          <ComboChevron />
        </Combo>
        <FormulaTools>
          <ToolRow items={formulaTools} start={148} />
        </FormulaTools>
        <FormulaInput>06/10/2025</FormulaInput>
      </FormulaBar>
      <InfoBar>
        <InfoBadge>i</InfoBadge>
        Help us make LibreOffice even better!
      </InfoBar>
      <Sheet>
        <ColHead />
        {columns.map((c) => (
          <ColHead key={c} $on={c === "A"}>
            {c}
          </ColHead>
        ))}
        {rowNumbers.map((n) => (
          <SheetRow key={n} n={n} />
        ))}
      </Sheet>
      <PopupMenu items={dataItems} x={301} y={50} w={182} iconW={37} keyPad={19} />
      <PopupMenu items={groupItems} x={481} y={468} w={166} iconW={37} keyPad={17} />
      <Callout $x={298} $y={22} $w={46} $h={27} />
      <Callout $x={300} $y={467} $w={178} $h={32} />
      <Callout $x={480} $y={465} $w={169} $h={28} />
    </Window>
  );
}
